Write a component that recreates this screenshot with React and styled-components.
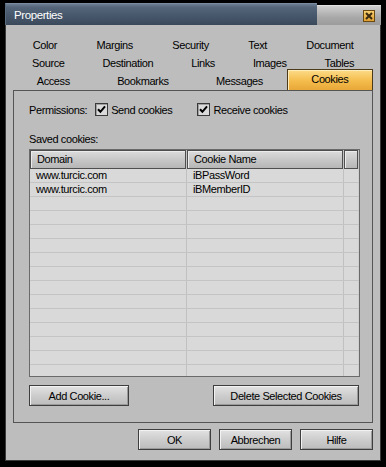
import React from "react";
import styled, { createGlobalStyle } from "styled-components";

const Global = createGlobalStyle`
  html, body { margin: 0; padding: 0; background: #000; }
  body { font-family: "Liberation Sans", Arial, sans-serif; font-size: 11px; letter-spacing: -0.4px; color: #000; }
`;

const Window = styled.div`
  margin: 3px 0 0 5px;
  width: 376px;
`;

const TitleRow = styled.div`
  display: flex;
  align-items: flex-end;
  height: 22px;
`;

const TitleBar = styled.div`
  width: 312px;
  height: 22px;
  box-sizing: border-box;
  padding-left: 8px;
  display: flex;
  align-items: center;
  color: #fff;
  font-size: 11.5px;
  background: linear-gradient(#6e7e92 0%, #56667a 15%, #46566a 60%, #3a485a 100%);
  border-top: 1px solid #7a8aa0;
  border-left: 1px solid #5a6a7e;
`;

const TitleTail = styled.div`
  flex: 1;
  height: 20px;
  box-sizing: border-box;
  display: flex;
  align-items: center;
  justify-content: flex-end;
  padding-right: 6px;
  background: linear-gradient(#cfcfcf, #a8a8a8 60%, #9c9c9c);
  border-top: 1px solid #e0e0e0;
`;

const CloseBox = styled.div`
  width: 12px;
  height: 12px;
  box-sizing: border-box;
  border: 1px solid #6a4a10;
  background: linear-gradient(#f8d070, #e0a030);
  display: flex;
  align-items: center;
  justify-content: center;
`;

const Body = styled.div`
  height: 436px;
  box-sizing: border-box;
  background: #bdbdbd;
  border-left: 1px solid #3a3a3a;
  border-right: 1px solid #3a3a3a;
  border-bottom: 1px solid #3a3a3a;
  padding: 11px 7px 0 7px;
  display: flex;
  flex-direction: column;
`;

const TabRow = styled.div`
  display: flex;
  height: 18px;
  align-items: center;
`;

const Tab = styled.div`
  flex: 1 1 auto;
  text-align: center;
  white-space: nowrap;
  line-height: 18px;
  ${(p) =>
    p.$active &&
    `
    align-self: flex-end;
    height: 21px;
    line-height: 19px;
    box-sizing: border-box;
    margin-top: -3px;
    background: linear-gradient(#fcdc88, #f4bc4c 55%, #e8a838);
    border: 1px solid #4a3a1a;
    border-bottom: none;
    box-shadow: inset 1px 1px #ffeebb;
  `}
`;

const Panel = styled.div`
  height: 333px;
  box-sizing: border-box;
  border: 1px solid #555;
  padding: 12px 0 0 15px;
  display: flex;
  flex-direction: column;
`;

const PermRow = styled.div`
  display: flex;
  align-items: center;
  height: 13px;
`;

const PermLabel = styled.span`
  margin-right: 8px;
`;

const CheckLabel = styled.label`
  display: flex;
  align-items: center;
  gap: 3px;
  margin-right: ${(p) => p.$gap || 0}px;
`;

const Box = styled.span`
  width: 13px;
  height: 13px;
  box-sizing: border-box;
  border: 1px solid #3a3a3a;
  background: #dadada;
  box-shadow: inset 1px 1px #a0a0a0;
  display: flex;
  align-items: center;
  justify-content: center;
`;

const SectionLabel = styled.div`
  margin-top: 17px;
  line-height: 13px;
`;

const List = styled.div`
  margin-top: 3px;
  width: 331px;
  height: 228px;
  box-sizing: border-box;
  border: 1px solid #6a6a6a;
  background: #d9d9d9;
  overflow: hidden;
`;

const Cols = "157px 157px 1fr";

const HeaderRow = styled.div`
  display: grid;
  grid-template-columns: ${Cols};
  height: 19px;
  background: #c4c4c4;
`;

const HeaderCell = styled.div`
  box-sizing: border-box;
  border: 1px solid #4e4e4e;
  margin-right: 1px;
  background: linear-gradient(#dcdcdc, #c4c4c4 60%, #b6b6b6);
  box-shadow: inset 1px 1px #ececec;
  padding-left: 6px;
  line-height: 17px;
`;

const Row = styled.div`
  display: grid;
  grid-template-columns: ${Cols};
  height: 14px;
  box-sizing: border-box;
  border-bottom: 1px solid #c4c4c4;
`;

const Cell = styled.div`
  padding-left: 6px;
  line-height: 13px;
  white-space: nowrap;
  border-right: 1px solid ${(p) => (p.$faint ? "#d0d0d0" : "#c0c0c0")};
`;

const ButtonRow = styled.div`
  display: flex;
  justify-content: space-between;
  width: 330px;
  margin-top: 8px;
`;

const Button = styled.button`
  width: ${(p) => p.$w}px;
  height: 21px;
  box-sizing: border-box;
  padding: 0;
  font-family: inherit;
  font-size: 11px;
  letter-spacing: -0.4px;
  color: #000;
  border: 1px solid #3e3e3e;
  background: linear-gradient(#e2e2e2, #cdcdcd 50%, #bcbcbc);
  box-shadow: inset 1px 1px #f2f2f2, inset -1px -1px #9a9a9a;
`;

const Footer = styled.div`
  display: flex;
  justify-content: flex-end;
  gap: 8px;
  margin-top: 6px;
`;

const Check = () => (
  <svg width="9" height="9" viewBox="0 0 9 9">
    <path d="M1 4.2 L3.4 6.8 L8 1.4" stroke="#000" strokeWidth="2" fill="none" />
  </svg>
);

const data = [
  ["www.turcic.com", "iBPassWord"],
  ["www.turcic.com", "iBMemberID"],
];

const tabRows = [
  ["Color", "Margins", "Security", "Text", "Document"],
  ["Source", "Destination", "Links", "Images", "Tables"],
  ["Access", "Bookmarks", "Messages", "Cookies"],
];

export default function App() {
  const rows = [...data, ...Array.from({ length: 14 }, () => ["", ""])];
  return (
    <>
      <Global />
      <Window>
        <TitleRow>
          <TitleBar>Properties</TitleBar>
          <TitleTail>
            <CloseBox>
              <svg width="8" height="8" viewBox="0 0 8 8">
                <path d="M1 1 L7 7 M7 1 L1 7" stroke="#3a2a10" strokeWidth="2" />
              </svg>
            </CloseBox>
          </TitleTail>
        </TitleRow>
        <Body>
          {tabRows.map((r, i) => (
            <TabRow key={i}>
              {r.map((t) => (
                <Tab key={t} $active={t === "Cookies"}>
                  {t}
                </Tab>
              ))}
            </TabRow>
          ))}
          <Panel>
            <PermRow>
              <PermLabel>Permissions:</PermLabel>
              <CheckLabel $gap={25}>
                <Box>
                  <Check />
                </Box>
                Send cookies
              </CheckLabel>
              <CheckLabel>
                <Box>
                  <Check />
                </Box>
                Receive cookies
              </CheckLabel>
            </PermRow>
            <SectionLabel>Saved cookies:</SectionLabel>
            <List>
              <HeaderRow>
                <HeaderCell>Domain</HeaderCell>
                <HeaderCell>Cookie Name</HeaderCell>
                <HeaderCell />
              </HeaderRow>
              {rows.map((r, i) => (
                <Row key={i}>
                  <Cell>{r[0]}</Cell>
                  <Cell>{r[1]}</Cell>
                  <Cell $faint />
                </Row>
              ))}
            </List>
            <ButtonRow>
              <Button $w={100}>Add Cookie...</Button>
              <Button $w={146}>Delete Selected Cookies</Button>
            </ButtonRow>
          </Panel>
          <Footer>
            <Button $w={73}>OK</Button>
            <Button $w={73}>Abbrechen</Button>
            <Button $w={73}>Hilfe</Button>
          </Footer>
        </Body>
      </Window>
    </>
  );
}
